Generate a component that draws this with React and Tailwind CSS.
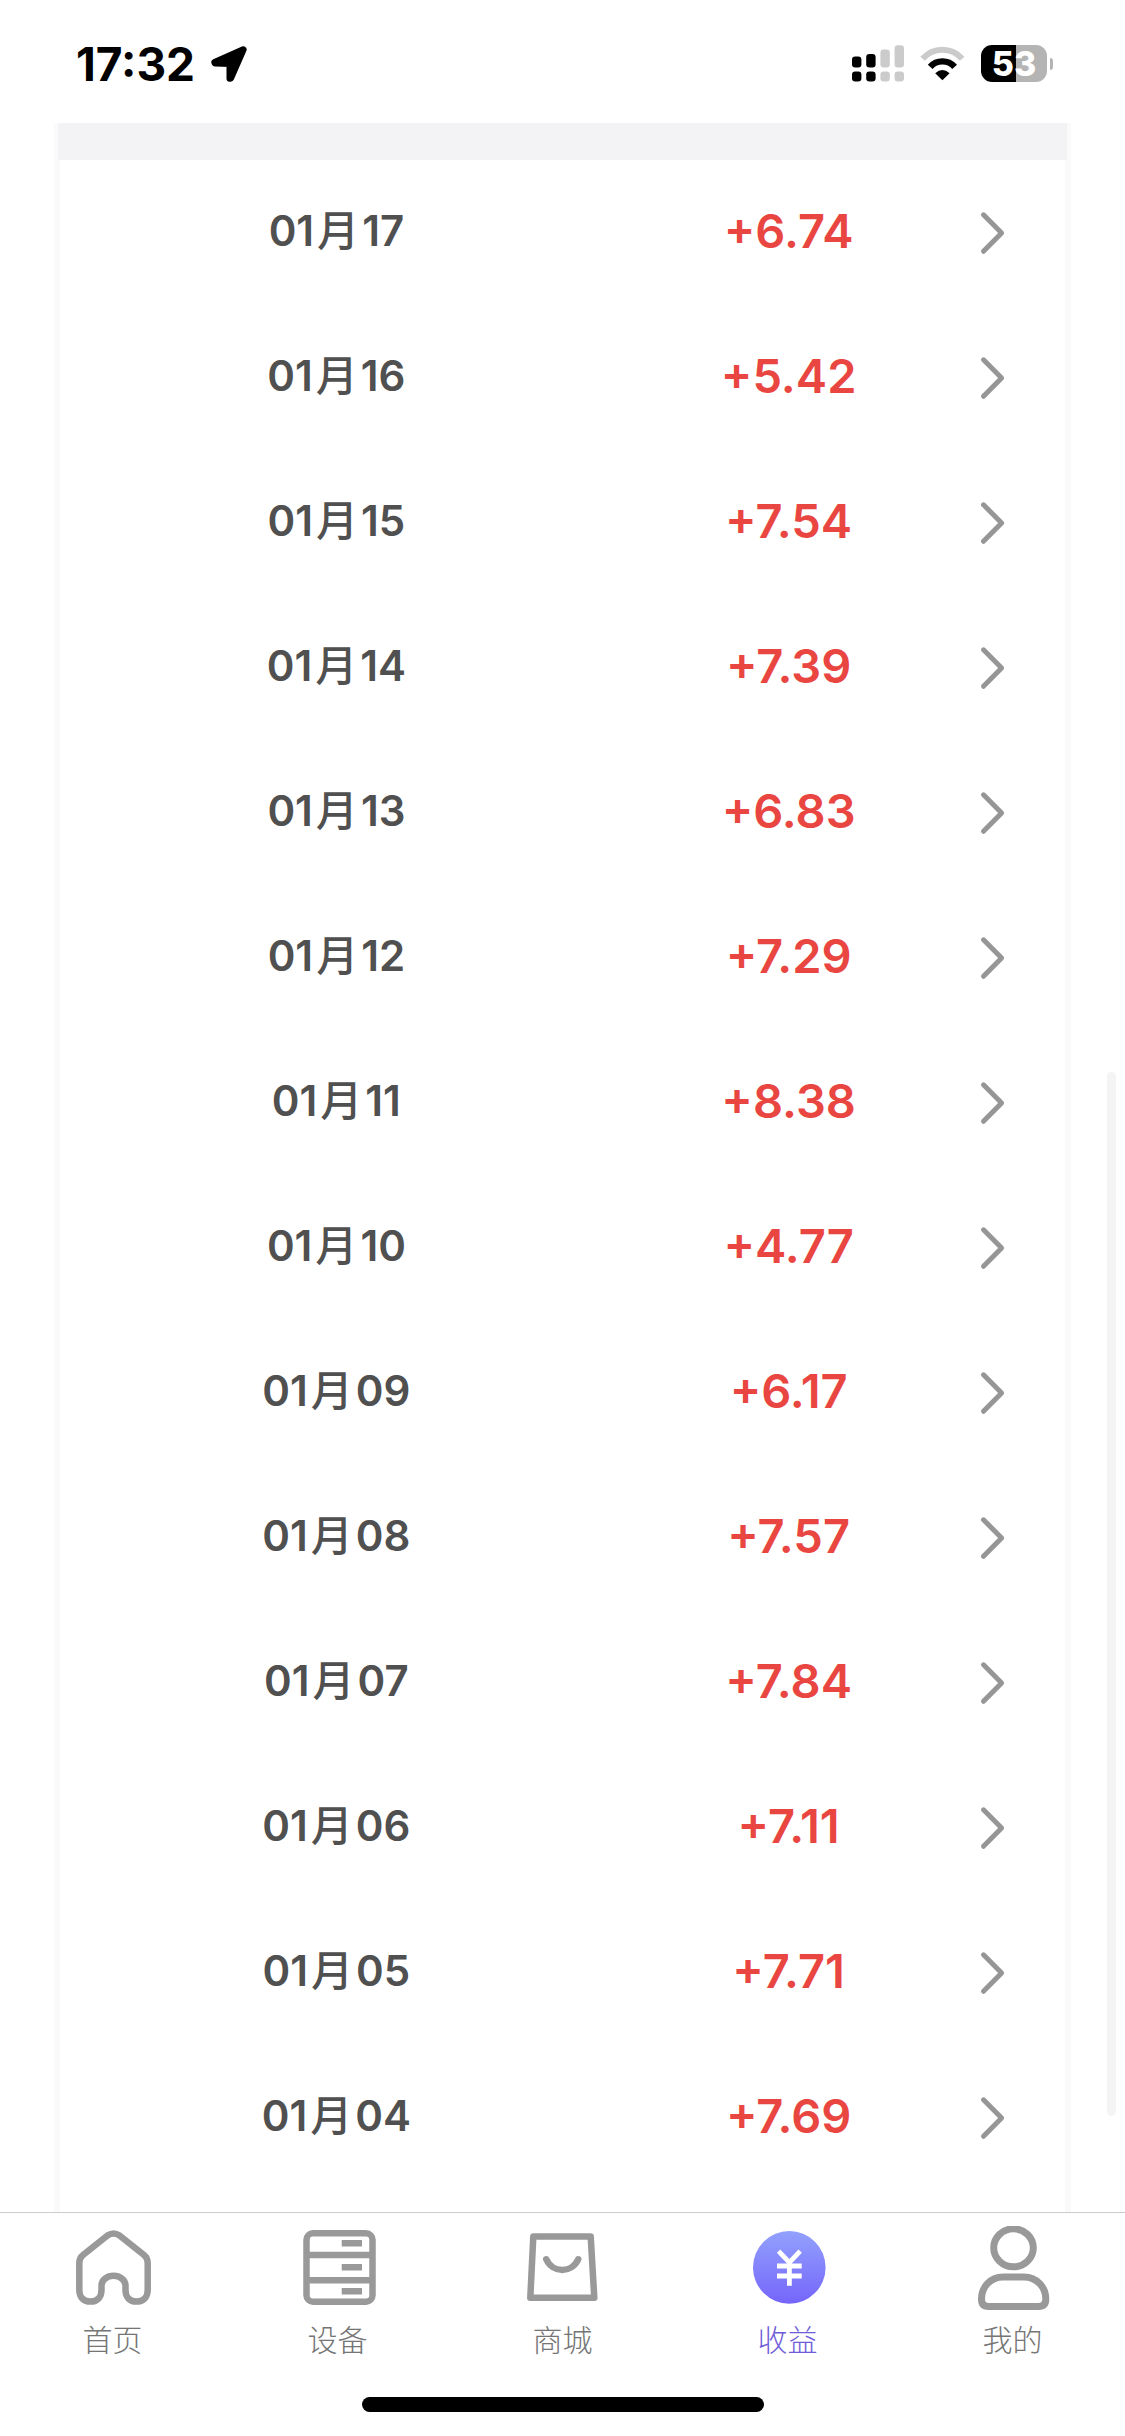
import React, { useState } from "react";

const records = [
  { month: "01", day: "17", amount: "+6.74" },
  { month: "01", day: "16", amount: "+5.42" },
  { month: "01", day: "15", amount: "+7.54" },
  { month: "01", day: "14", amount: "+7.39" },
  { month: "01", day: "13", amount: "+6.83" },
  { month: "01", day: "12", amount: "+7.29" },
  { month: "01", day: "11", amount: "+8.38" },
  { month: "01", day: "10", amount: "+4.77" },
  { month: "01", day: "09", amount: "+6.17" },
  { month: "01", day: "08", amount: "+7.57" },
  { month: "01", day: "07", amount: "+7.84" },
  { month: "01", day: "06", amount: "+7.11" },
  { month: "01", day: "05", amount: "+7.71" },
  { month: "01", day: "04", amount: "+7.69" },
];

const HomeIcon = () => (
  <path d="M37.5 9.5 L13 29 Q9.3 32 9.3 37 V64 C9.3 71.5 14 75.6 20.5 75.6 C27.5 75.6 31.5 71 31.5 64 V59.5 C31.5 54 37 49.8 43.5 49.8 C50 49.8 55.5 54 55.5 59.5 V64 C55.5 71 59.5 75.6 66.5 75.6 C73 75.6 77.7 71.5 77.7 64 V37 Q77.7 32 74 29 L49.5 9.5 Q43.5 5.5 37.5 9.5 Z" />
);

const DeviceIcon = () => (
  <>
    <rect x="11.5" y="7.3" width="66" height="68.4" rx="6.5" />
    <path d="M11.5 29H77.5M11.5 54.3H77.5M46.7 17.3H67M46.7 41.3H67M46.7 65.3H67" />
  </>
);

const ShopIcon = () => (
  <>
    <path d="M13.3 10.6H70.7L74.3 71.8H10.3Z" />
    <path d="M26.3 33.3C33 47.5 51.5 47.5 58.2 33.3" strokeLinecap="round" />
  </>
);

const IncomeIcon = () => (
  <>
    <defs>
      <linearGradient id="coin" x1="0" y1="0" x2="0" y2="1">
        <stop offset="0" stopColor="#92a1fd" />
        <stop offset="1" stopColor="#7565fb" />
      </linearGradient>
    </defs>
    <circle cx="44.3" cy="41.4" r="36.3" fill="url(#coin)" stroke="none" />
    <path
      d="M33.6 25.2L44.4 36.5L55.2 25.2M32 40H56.7M32 50H56.7M44.4 36V59.7"
      stroke="#fff"
      strokeWidth="4.8"
      strokeLinejoin="miter"
    />
  </>
);

const UserIcon = () => (
  <>
    <ellipse cx="43.5" cy="21.8" rx="19.8" ry="19" strokeWidth="7" />
    <path
      d="M33 51H54C67 51 75.8 61.5 75.8 73Q75.8 80.5 68.5 80.5H18.5Q11.5 80.5 11.5 73C11.5 61.5 20 51 33 51Z"
      strokeWidth="7"
    />
  </>
);

const tabs = [
  { id: "home", label: "首页", Icon: HomeIcon },
  { id: "device", label: "设备", Icon: DeviceIcon },
  { id: "shop", label: "商城", Icon: ShopIcon },
  { id: "income", label: "收益", Icon: IncomeIcon },
  { id: "mine", label: "我的", Icon: UserIcon },
];

const StatusBar = () => (
  <header className="flex h-[123px] shrink-0 items-center justify-between pl-[76px] pr-[72px] pt-1">
    <div className="flex items-center gap-4">
      <time className="text-[46px] leading-[48px] font-bold text-black">17:32</time>
      <svg className="size-9" viewBox="0 0 36 36" aria-hidden="true">
        <path
          d="M32.3 3.6L3.6 16.3L4 17.3L18.8 17.6V32.4L19.8 32.2Z"
          stroke="#000"
          strokeWidth="6.6"
          strokeLinejoin="round"
        />
      </svg>
    </div>

    <div className="flex items-center gap-4">
      <svg className="h-[37px] w-[52px]" viewBox="0 0 52 37" aria-hidden="true">
        <rect x="0" y="11.5" width="9.4" height="11" rx="3.2" />
        <rect x="0" y="26.5" width="9.4" height="10" rx="3.2" />
        <rect x="14.2" y="9" width="9.4" height="13.5" rx="3.2" />
        <rect x="14.2" y="26.5" width="9.4" height="10" rx="3.2" />
        <g fill="#cbcbcb">
          <rect x="28.4" y="4.5" width="9.4" height="18" rx="3.2" />
          <rect x="28.4" y="26.5" width="9.4" height="10" rx="3.2" />
          <rect x="42.6" y="0.3" width="9.4" height="22.2" rx="3.2" />
          <rect x="42.6" y="26.5" width="9.4" height="10" rx="3.2" />
        </g>
      </svg>

      <svg className="h-[37px] w-[45px]" viewBox="0 0 45 37" fill="none" aria-hidden="true">
        <path d="M2.6 13.8A26 26 0 0 1 42.2 13.8" stroke="#cbcbcb" strokeWidth="6" />
        <path d="M10.2 21.8A16.5 16.5 0 0 1 34.6 21.8" stroke="#000" strokeWidth="6.4" />
        <path d="M22.4 35.2L15.2 28.2Q22.4 21.6 29.6 28.2Z" fill="#000" />
      </svg>

      <div className="flex items-center gap-[3px]">
        <div className="flex h-[37px] w-[66px] items-center justify-center rounded-[11px] bg-linear-to-r from-black from-53% to-[#b4b4b4] to-53%">
          <span className="text-[34px] leading-[36px] font-extrabold text-white">53</span>
        </div>
        <div className="h-3 w-[3px] rounded-r-full bg-[#b4b4b4]" />
      </div>
    </div>
  </header>
);

const RecordRow = ({ month, day, amount }) => (
  <li>
    <button
      type="button"
      className="grid h-[145px] w-full grid-cols-[55%_35%_10%] items-center text-center font-semibold"
    >
      <span className="pb-1 text-[42px] leading-[48px] text-[#505050]">
        {month}
        <span className="mx-[3px] font-medium">月</span>
        {day}
      </span>
      <span className="pb-1 text-[47px] leading-[56px] text-[#e94642]">{amount}</span>
      <svg
        className="ml-1 h-12 w-10"
        viewBox="0 0 40 48"
        fill="none"
        stroke="#969696"
        strokeWidth="5"
        strokeLinecap="round"
        strokeLinejoin="round"
        aria-hidden="true"
      >
        <path d="M14.5 5.8L32.6 24L14.5 42.3" />
      </svg>
    </button>
  </li>
);

const App = () => {
  const [activeTab, setActiveTab] = useState("income");

  return (
    <div className="flex h-screen flex-col bg-white font-['Inter','Noto_Sans_CJK_SC',sans-serif]">
      <StatusBar />

      <main className="relative min-h-0 flex-1 overflow-hidden">
        <div className="mx-[54px] h-full border-x-[6px] border-[#fafafa]">
          <div className="-mx-0.5 h-[37px] bg-[#f3f3f5]" />
          <ul>
            {records.map((record) => (
              <RecordRow key={record.month + record.day} {...record} />
            ))}
          </ul>
        </div>
        {/* Scroll indicator */}
        <div className="absolute right-[9px] bottom-24 h-1/2 w-[9px] rounded-full bg-[#f4f4f4]" />
      </main>

      <nav className="shrink-0 border-t border-[#cccccc] pt-[13px] pb-6">
        <div className="grid grid-cols-5">
          {tabs.map(({ id, label, Icon }) => (
            <button
              key={id}
              type="button"
              onClick={() => setActiveTab(id)}
              className={`flex flex-col items-center gap-2 ${
                id === activeTab ? "text-[#6f5cd8]" : "text-[#757575]"
              }`}
            >
              <svg
                className="size-[85px]"
                viewBox="0 0 85 85"
                fill="none"
                stroke="#999999"
                strokeWidth="6.5"
                strokeLinejoin="round"
                aria-hidden="true"
              >
                <Icon />
              </svg>
              <span className="text-[30px] leading-[42px] font-light">{label}</span>
            </button>
          ))}
        </div>
        {/* Home bar */}
        <div className="mx-auto mt-9 h-[15px] w-[402px] rounded-full bg-black" />
      </nav>
    </div>
  );
};

export default App;
